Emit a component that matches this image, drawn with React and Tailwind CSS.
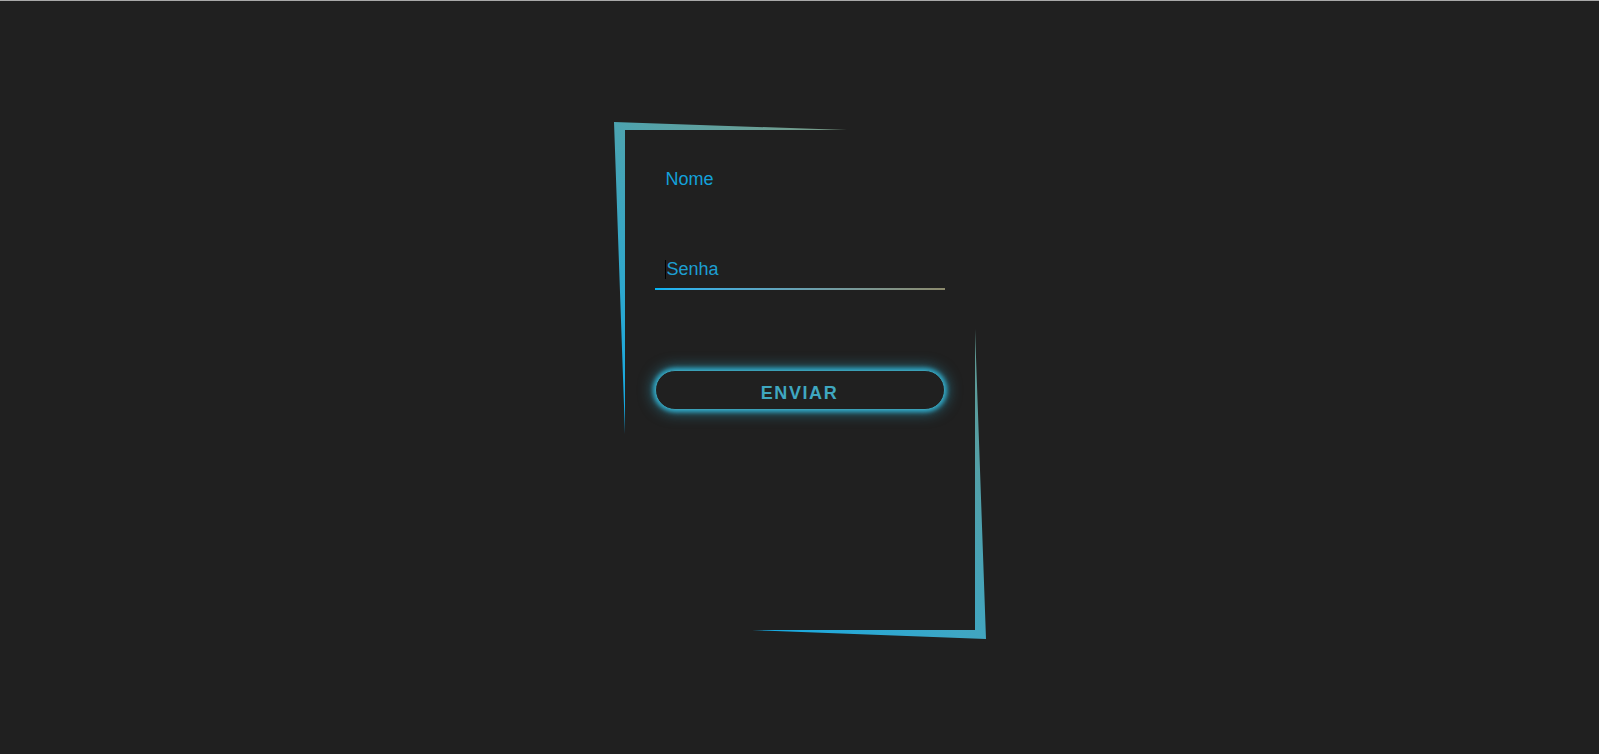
import React from "react";

function CornerTopLeft() {
  return (
    <svg
      className="absolute left-[-11px] top-[-8px] overflow-visible"
      width="240"
      height="320"
      viewBox="-11 -8 240 320"
    >
      <defs>
        <linearGradient id="tl" x1="1" y1="0" x2="0" y2="1">
          <stop offset="0%" stopColor="#7c9a84" />
          <stop offset="45%" stopColor="#52a3ab" />
          <stop offset="100%" stopColor="#0fabea" />
        </linearGradient>
      </defs>
      <polygon points="-11,-8 222,0 0,0 0,304" fill="url(#tl)" />
    </svg>
  );
}

function CornerBottomRight() {
  return (
    <svg
      className="absolute left-[126px] top-[198px] overflow-visible"
      width="236"
      height="312"
      viewBox="126 198 236 312"
    >
      <defs>
        <linearGradient id="br" x1="1" y1="0" x2="0" y2="1">
          <stop offset="0%" stopColor="#649a90" />
          <stop offset="55%" stopColor="#3ea6c4" />
          <stop offset="100%" stopColor="#12abe6" />
        </linearGradient>
      </defs>
      <polygon points="350,199 350,500 127,500 361,509" fill="url(#br)" />
    </svg>
  );
}

export default function App() {
  return (
    <div
      className="min-h-screen bg-[#202020] border-t border-[#a9a9a9] flex justify-center pt-[129px]"
      style={{ fontFamily: "'Liberation Sans', Arial, sans-serif" }}
    >
      <div className="relative w-[350px] h-[500px] px-[30px] pt-[30px]">
        <CornerTopLeft />
        <CornerBottomRight />

        {/* Nome */}
        <div className="relative h-10 flex items-center pl-[11px] border-b-2 border-transparent">
          <span className="text-[18px] text-[#13a0da]">Nome</span>
        </div>

        {/* Senha (focused) */}
        <div className="relative mt-[49px] h-10 flex items-center pl-[10px]">
          <span className="w-px h-[19px] bg-black mr-px"></span>
          <span className="text-[18px] text-[#1d9fd2]">Senha</span>
          <div className="absolute left-0 right-0 bottom-[-1px] h-[2px] bg-linear-to-r from-[#00b4f5] to-[#8c8a6c]"></div>
        </div>

        {/* Botão */}
        <button
          type="button"
          className="mt-[81px] w-full h-[40px] rounded-full bg-[#202020] border border-[#3a9fb6] shadow-[0_0_4px_2px_#2fa6c4,0_0_14px_3px_rgba(47,166,196,0.55)] flex items-center justify-center pt-[6px] text-[18px] font-bold tracking-[1.6px] text-[#3fa7c0]"
        >
          ENVIAR
        </button>
      </div>
    </div>
  );
}
